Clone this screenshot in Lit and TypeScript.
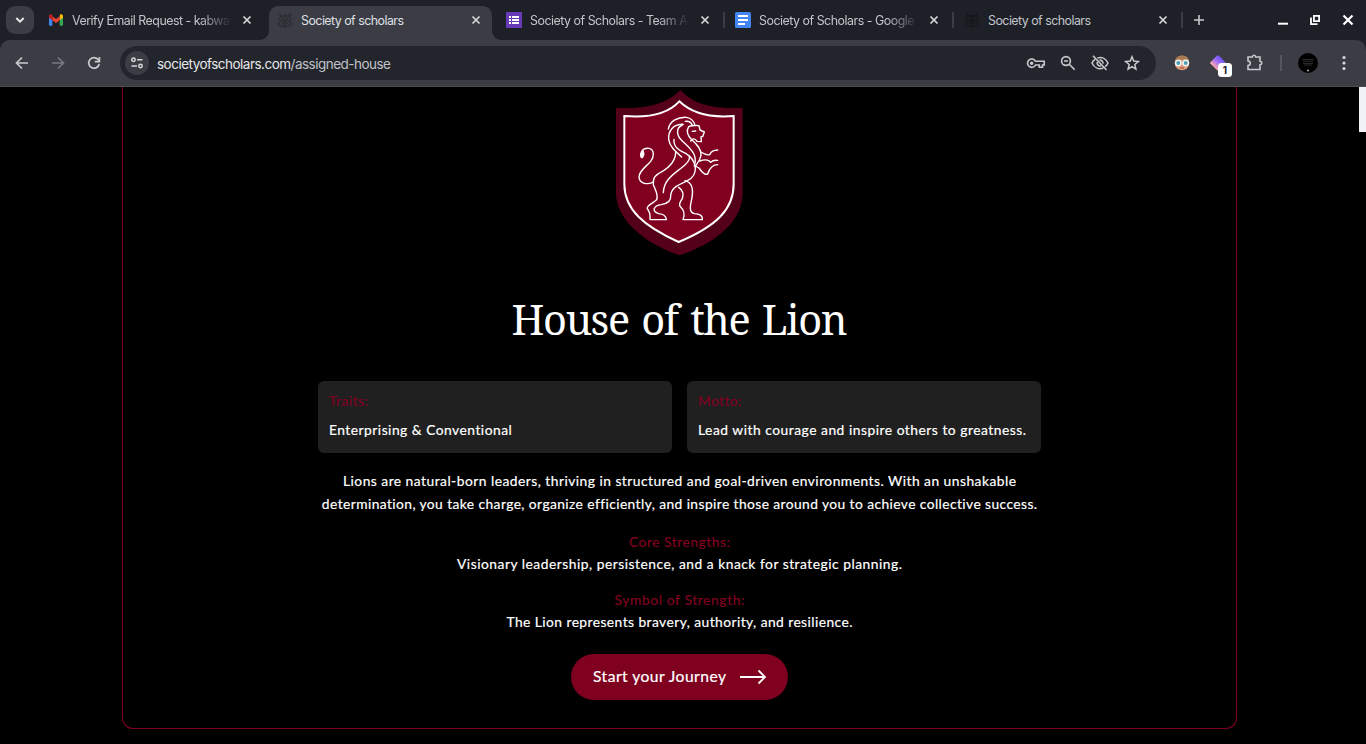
import { LitElement, html, css, svg, nothing } from "lit";
import { customElement, property } from "lit/decorators.js";

/** One line of text, tracked so that it fills the given measure. */
@customElement("tracked-line")
class TrackedLine extends LitElement {
  @property({ type: Number }) measure = 0;
  static styles = css`
    :host { display: inline-block; white-space: nowrap; }
    .run { display: inline-block; }
  `;
  firstUpdated() {
    const run = this.renderRoot.querySelector(".run") as HTMLElement;
    const n = (this.textContent || "").length;
    const natural = run.getBoundingClientRect().width;
    if (n > 1 && this.measure) {
      const gap = (this.measure - natural) / (n - 1);
      run.style.letterSpacing = gap + "px";
      run.style.marginRight = -gap + "px";
    }
  }
  render() {
    return html`<span class="run"><slot></slot></span>`;
  }
}

const crest = (color: string) => svg`
  <g fill="none" stroke=${color} stroke-width="1.300">
    <path d="M2 1l2 3h8l2-3M4 4l-2 3 2 2-3 3 3 3M12 4l2 3-2 2 3 3-3 3M5 6l3 2 3-2M6 10l2 3 2-3M4 13l4 2 4-2M8 2v4M5 8l6 3M11 8l-6 3"/>
  </g>`;

const favicons: Record<string, unknown> = {
  mail: svg`
    <path d="M1 3.6v9.2c0 .6.4 1 1 1h2.3V7.6z" fill="#4285f4"/>
    <path d="M15 3.6v9.2c0 .6-.4 1-1 1h-2.300V7.6z" fill="#34a853"/>
    <path d="M11.700 4.300v3.900L15 5.700V4.100c0-1.700-1.800-2.400-3-1.500z" fill="#fbbc04"/>
    <path d="M4.300 8.200V4.300L8 7l3.700-2.700v3.900L8 11z" fill="#ea4335"/>
    <path d="M1 4.100v1.600l3.300 2.500V4.300L4 2.600C2.800 1.700 1 2.400 1 4.100z" fill="#c5221f"/>`,
  crestActive: crest("#2b2d33"),
  crest: crest("#15171b"),
  forms: svg`<rect width="16" height="16" fill="#673ab7"/>
    <g fill="#fff"><rect x="3" y="4" width="2" height="2"/><rect x="6" y="4" width="7" height="2"/>
    <rect x="3" y="7" width="2" height="2"/><rect x="6" y="7" width="7" height="2"/>
    <rect x="3" y="10" width="2" height="2"/><rect x="6" y="10" width="7" height="2"/></g>`,
  docs: svg`<rect width="16" height="16" rx="1.500" fill="#4285f4"/>
    <g fill="#fff"><rect x="3" y="3" width="10" height="2"/><rect x="3" y="7" width="10" height="2"/><rect x="3" y="11" width="7" height="2"/></g>`,
};

const tabs = [
  { icon: "mail", text: "Verify Email Request - kabwata", active: false, sep: false, width: 168 },
  { icon: "crestActive", text: "Society of scholars", active: true, sep: false, width: 103 },
  { icon: "forms", text: "Society of Scholars - Team App", active: false, sep: true, width: 172 },
  { icon: "docs", text: "Society of Scholars - Google D", active: false, sep: true, width: 167 },
  { icon: "crest", text: "Society of scholars", active: false, sep: true, width: 103 },
];

@customElement("browser-chrome")
class BrowserChrome extends LitElement {
  static styles = css`
    :host { display: block; height: 87px; background: #1d2027; font-family: Inter, "Liberation Sans", sans-serif; }
    svg { display: block; flex: none; }
    .strip { display: flex; height: 40px; box-sizing: border-box; padding-left: 6px; align-items: center; }
    .search { width: 28px; height: 28px; border-radius: 9px; background: #3b3c44; display: grid; place-items: center; margin-right: 6px; }
    .tab { display: flex; align-items: center; box-sizing: border-box; width: 223px; height: 40px; padding: 0 8px; color: #c3c5cb; position: relative; }
    .shape { display: none; }
    .active { color: #dfe0e4; }
    .active .shape { display: block; position: absolute; left: -10px; top: 6px; }
    .icon { position: relative; }
    .label { width: 158px; margin-left: 8px; overflow: hidden; white-space: nowrap; font-size: 12.4px; line-height: 18px; padding-top: 2px; position: relative; }
    .faded { mask-image: linear-gradient(90deg, #000 128px, transparent 160px); -webkit-mask-image: linear-gradient(90deg, #000 128px, transparent 160px); }
    .close { margin-left: 9px; position: relative; }
    .gap { width: 6px; display: flex; justify-content: center; }
    .bar { width: 2px; height: 16px; background: #3b3c44; }
    .plus { margin-left: 6px; }
    .window { margin-left: auto; display: flex; gap: 16px; padding-right: 10px; }
    .restore { margin-right: 1px; }
    .toolbar { display: flex; align-items: center; box-sizing: border-box; height: 46px; background: #3b3c44; border-radius: 10px 10px 0 0; padding-left: 14px; color: #c7c9ce; }
    .nav { display: flex; gap: 20px; }
    .dim { color: #777980; }
    .omni { display: flex; align-items: center; box-sizing: border-box; width: 1036px; height: 34px; margin-left: 18px; padding: 0 16px 0 5px; border-radius: 17px; background: #23252c; }
    .site { width: 24px; height: 24px; border-radius: 12px; background: #3b3c44; display: grid; place-items: center; }
    .url { margin-left: 8px; font-size: 13.5px; line-height: 20px; padding-top: 1px; color: #e6e7ea; }
    .path { color: #c0c2c8; }
    .actions { margin-left: auto; display: flex; gap: 15px; }
    .key { margin-right: -1px; }
    .ext { display: flex; align-items: center; margin-left: 18px; }
    .puzzle { margin-left: 18px; }
    .diamond { margin-left: 18px; position: relative; }
    .badge { position: absolute; left: 10px; top: 10px; width: 14px; height: 14px; border-radius: 3.5px; background: #fff; color: #1d2027; font-size: 10px; font-weight: 700; line-height: 14px; text-align: center; }
    .divider { width: 2px; height: 16px; background: #54555d; margin: 0 16px; }
    .avatar { width: 20px; height: 20px; }
    .dots { margin-left: 18px; }
    .edge { height: 1px; background: #4b4b50; }
  `;
  render() {
    return html`
      <div class="strip">
        <div class="search"><svg width="10" height="8" viewBox="0 0 10 8"><path d="M1.300 2L5 5.700 8.700 2" fill="none" stroke="#e6e7ea" stroke-width="2"/></svg></div>
        ${tabs.map((t) => html`
          <div class="tab ${t.active ? "active" : ""}">
            ${t.active ? html`<svg class="shape" width="243" height="34"><path d="M0 34C6 34 10 30 10 24V10C10 4 14 0 20 0H223C229 0 233 4 233 10V24C233 30 237 34 243 34Z" fill="#3b3c44"/></svg>` : nothing}
            <svg class="icon" width="16" height="16" viewBox="0 0 16 16">${favicons[t.icon]}</svg>
            <div class="label ${t.width > 150 ? "faded" : ""}"><tracked-line measure=${t.width}>${t.text}</tracked-line></div>
            <svg class="close" width="16" height="16" viewBox="0 0 16 16"><path d="M4.500 4.500l7 7M11.500 4.500l-7 7" stroke="#d5d7db" stroke-width="1.700"/></svg>
          </div>
          <div class="gap">${t.sep ? html`<div class="bar"></div>` : nothing}</div>`)}
        <svg class="plus" width="16" height="16" viewBox="0 0 16 16"><path d="M8 3v10M3 8h10" stroke="#c7c9ce" stroke-width="1.600"/></svg>
        <div class="window">
          <svg width="16" height="16" viewBox="0 0 16 16"><path d="M3 11.700h10" stroke="#fff" stroke-width="2"/></svg>
          <svg class="restore" width="16" height="16" viewBox="0 0 16 16" fill="none" stroke="#fff" stroke-width="1.800"><path d="M6.900 3.900h5.200v5.200H6.900z"/><path d="M4 5.500v6.600h6.500"/></svg>
          <svg width="16" height="16" viewBox="0 0 16 16"><path d="M3.500 3.500l9 9M12.500 3.500l-9 9" stroke="#fff" stroke-width="2.200"/></svg>
        </div>
      </div>
      <div class="toolbar">
        <div class="nav">
          <svg width="16" height="16" viewBox="0 0 16 16" fill="none" stroke="currentColor" stroke-width="1.700"><path d="M14 8H3M8 2.500L2.500 8 8 13.500"/></svg>
          <svg class="dim" width="16" height="16" viewBox="0 0 16 16" fill="none" stroke="currentColor" stroke-width="1.700"><path d="M2 8h11M8 2.500L13.500 8 8 13.500"/></svg>
          <svg width="16" height="16" viewBox="0 0 16 16" fill="none" stroke="currentColor" stroke-width="1.700"><path d="M13.200 9A5.300 5.300 0 1 1 12 4.400L13.500 6"/><path d="M13.400 2v4.600H8.800"/></svg>
        </div>
        <div class="omni">
          <div class="site"><svg width="14" height="14" viewBox="0 0 14 14" fill="none" stroke="#d5d7db" stroke-width="1.500"><circle cx="3.500" cy="3.800" r="1.700"/><path d="M7 3.800h5.500M1.500 10h5.500"/><circle cx="10.500" cy="10" r="1.700"/></svg></div>
          <div class="url"><tracked-line measure="234">societyofscholars.com<span class="path">/assigned-house</span></tracked-line></div>
          <div class="actions">
            <svg class="key" width="20" height="16" viewBox="0 0 20 16" fill="none" stroke="currentColor" stroke-width="1.600"><path d="M9.500 6.300H18.200V10H16.500v2.200h-3.200V10H9.500A4.200 4.200 0 1 1 9.500 6.300z"/><circle cx="5.700" cy="8.200" r="1" fill="currentColor"/></svg>
            <svg width="16" height="16" viewBox="0 0 16 16" fill="none" stroke="currentColor" stroke-width="1.600"><circle cx="6" cy="6" r="4.400"/><path d="M9.300 9.300L14.700 14.700M4 6h4"/></svg>
            <svg width="18" height="16" viewBox="0 0 18 16" fill="none" stroke="currentColor" stroke-width="1.600"><path d="M2 .800L15.500 15M6.500 3C11 1.500 15 4 17 8c-.7 1.600-1.700 2.800-3 3.700M12.300 13.100C7.500 14.600 3 12.500 1 8c.7-1.500 1.600-2.700 3-3.700"/><path d="M8.500 5.200A3 3 0 0 1 12 8.600M6.300 7A3 3 0 0 0 10 10.800"/></svg>
            <svg width="16" height="16" viewBox="0 0 16 16" fill="none" stroke="currentColor" stroke-width="1.500"><path d="M8 1.800l1.700 4.300 4.700.4-3.600 3 1.100 4.600L8 11.700l-3.900 2.400 1.100-4.600-3.600-3 4.700-.4z"/></svg>
          </div>
        </div>
        <div class="ext">
          <svg width="16" height="16" viewBox="0 0 16 16"><circle cx="8" cy="8" r="7.300" fill="#d99a78"/><path d="M.800 7C1 2.500 4.500.500 8 .500S15 2.500 15.200 7L12 4.500 4 4.800z" fill="#a77b52"/><circle cx="4.300" cy="8" r="2.700" fill="#4f9fb0" stroke="#f1f4f5" stroke-width="1.500"/><circle cx="11.700" cy="8" r="2.700" fill="#4f9fb0" stroke="#f1f4f5" stroke-width="1.500"/><path d="M6 13h4" stroke="#a9523e"/></svg>
          <div class="diamond">
            <svg width="20" height="20" viewBox="0 0 20 20"><defs><linearGradient id="g" x1="1" y1="0" x2="0" y2="1"><stop offset="0" stop-color="#4f3df5"/><stop offset=".45" stop-color="#9b6cf8"/><stop offset=".7" stop-color="#f1a0b8"/><stop offset="1" stop-color="#ffb48a"/></linearGradient></defs><path d="M9 2.500h2L18 10l-8 8-8.300-8z" fill="url(#g)"/></svg>
            <span class="badge">1</span>
          </div>
          <svg class="puzzle" width="18" height="18" viewBox="0 0 18 18" fill="none" stroke="currentColor" stroke-width="1.600"><path d="M2 3h4.300c.2-2.400 3.200-2.400 3.400 0H14v4.300c2.400.2 2.400 3.200 0 3.400V15.500H2v-4c3-.2 3-4.300 0-4.500z"/></svg>
          <div class="divider"></div>
          <svg class="avatar" viewBox="0 0 20 20"><circle cx="10" cy="10" r="10" fill="#000"/><path d="M4 6.500h12M5 8.300h10M5 10.500h10M6 12h8" stroke="#35363a" stroke-width=".8"/><circle cx="10" cy="17.500" r="1" fill="#bbb"/></svg>
          <svg class="dots" width="16" height="16" viewBox="0 0 16 16" fill="#d5d7db"><circle cx="8" cy="2.500" r="1.600"/><circle cx="8" cy="8" r="1.600"/><circle cx="8" cy="13.500" r="1.600"/></svg>
        </div>
      </div>
      <div class="edge"></div>`;
  }
}

@customElement("lion-shield")
class LionShield extends LitElement {
  static styles = css`:host, svg { display: block; }`;
  render() {
    return html`<svg width="129" height="167" viewBox="45 9 387 501">
      <path d="M241 12C280 55 335 69 428 66V320C428 405 350 470 239 508C130 470 48 400 48 320V66C140 69 200 55 241 12Z" fill="#530018"/>
      <path d="M238 46C275 82 330 96 401 90V294C401 370 350 420 236 468C130 420 73 370 73 294V90C145 96 205 82 238 46Z" fill="#800020" stroke="#fff" stroke-width="6"/>
      <g fill="none" stroke="#fff" stroke-width="4.200" stroke-linecap="round" stroke-linejoin="round">
        <path d="M128 214C122 218 120 206 124 198C130 187 138 186 147 187C164 191 163 212 152 226C138 243 118 253 117 273C118 292 140 297 158 289"/>
        <path d="M127 213C121 212 123 200 129 195C132 202 131 210 127 213Z" fill="#fff"/>
        <path d="M227 196C228 224 206 245 186 257C165 268 158 275 160 296C166 312 176 326 170 341C164 350 138 358 142 368C150 377 151 389 150 401H199C198 389 188 384 176 383C154 377 160 359 184 356C206 352 213 341 212 330C213 302 240 296 262 284C281 275 288 262 286 242"/>
        <path d="M190 320C191 286 215 268 240 249C262 233 272 222 268 210"/>
        <path d="M236 304C249 313 252 324 247 338C240 349 236 353 240 361C252 372 256 384 249 401H307C308 387 299 384 283 383C267 379 270 361 275 340C282 306 275 289 255 284"/>
        <path d="M205 129C209 104 235 93 259 94C273 96 282 106 285 118M256 106C268 105 275 110 277 119"/>
        <path d="M250 115C219 114 204 136 206 160C209 182 227 197 245 213"/>
        <path d="M247 117C227 126 229 148 246 164C264 182 281 193 285 214C288 226 285 234 283 240"/>
        <path d="M266 122C257 137 264 151 276 162C291 175 304 188 303 208C300 224 292 232 285 242"/>
        <path d="M222 160C220 185 238 192 258 203C276 214 282 225 285 240"/>
        <path d="M266 122C276 116 288 119 297 119L300 132L313 138L308 152H303L304 167L291 166C285 156 278 157 272 165M277 136L287 135"/>
        <path d="M304 199C317 204 321 209 329 206C335 194 343 193 353 192M299 225C313 220 325 219 332 229C338 222 346 222 353 223M286 240L297 246C305 258 315 268 323 264C328 249 335 236 353 236"/>
      </g></svg>`;
  }
}

@customElement("app-root")
class AppRoot extends LitElement {
  static styles = css`
    :host { display: block; width: 1366px; height: 744px; overflow: hidden; background: #000; color: #fff; font-family: Lato, "Open Sans", sans-serif; }
    .page { display: flex; height: 657px; }
    .card { box-sizing: border-box; margin-left: 122px; width: 1115px; height: 642px; border: 1px solid #800020; border-top: 0; border-radius: 0 0 11px 11px; display: flex; flex-direction: column; align-items: center; }
    .thumb { margin-left: auto; width: 7px; height: 45px; background: #f1f2f7; }
    lion-shield { margin-top: 2px; }
    .title { margin: 33px 0 0; font: 400 41.5px/60px "Noto Serif", "DejaVu Serif Condensed", "DejaVu Serif", serif; word-spacing: 3px; }
    .facts { display: flex; gap: 15px; margin-top: 32px; }
    .fact { box-sizing: border-box; width: 354px; height: 72px; padding: 9px 11px; border-radius: 6px; background: #202020; font-size: 13.8px; line-height: 22px; -webkit-text-stroke: .2px; }
    .fact .term { margin-bottom: 7px; }
    .term { color: #800020; }
    .copy { font-size: 13.8px; line-height: 22px; text-align: center; -webkit-text-stroke: .2px; }
    .intro { margin-top: 16px; line-height: 23px; }
    .strength { margin-top: 14px; }
    .intro + .strength { margin-top: 16px; }
    .cta { display: flex; align-items: center; box-sizing: border-box; width: 217px; height: 46px; margin-top: 21px; padding: 0 21px; border: 0; border-radius: 23px; background: #800020; color: #fff; font: 400 15.600px/22px Lato, sans-serif; -webkit-text-stroke: .2px; }
    .cta tracked-line { padding: 0 0 2px 1px; }
    .cta svg { margin-left: auto; }
  `;
  render() {
    const line = (text: string, w: number) => html`<tracked-line measure=${w}>${text}</tracked-line>`;
    return html`
      <browser-chrome></browser-chrome>
      <div class="page">
        <div class="card">
          <lion-shield></lion-shield>
          <h1 class="title">${line("House of the Lion", 336)}</h1>
          <div class="facts">
            <div class="fact"><div class="term">${line("Traits:", 39)}</div><div>${line("Enterprising & Conventional", 183)}</div></div>
            <div class="fact"><div class="term">${line("Motto:", 43)}</div><div>${line("Lead with courage and inspire others to greatness.", 328)}</div></div>
          </div>
          <div class="copy intro">
            <div>${line("Lions are natural-born leaders, thriving in structured and goal-driven environments. With an unshakable", 673)}</div>
            <div>${line("determination, you take charge, organize efficiently, and inspire those around you to achieve collective success.", 715)}</div>
          </div>
          <div class="copy strength"><div class="term">${line("Core Strengths:", 101)}</div><div>${line("Visionary leadership, persistence, and a knack for strategic planning.", 445)}</div></div>
          <div class="copy strength"><div class="term">${line("Symbol of Strength:", 130)}</div><div>${line("The Lion represents bravery, authority, and resilience.", 346)}</div></div>
          <button class="cta">${line("Start your Journey", 133)}
            <svg width="28" height="16" viewBox="0 0 28 16" fill="none" stroke="#fff" stroke-width="1.800"><path d="M1 8h25M19.500 1.500L26 8l-6.500 6.500"/></svg>
          </button>
        </div>
        <div class="thumb"></div>
      </div>`;
  }
}
